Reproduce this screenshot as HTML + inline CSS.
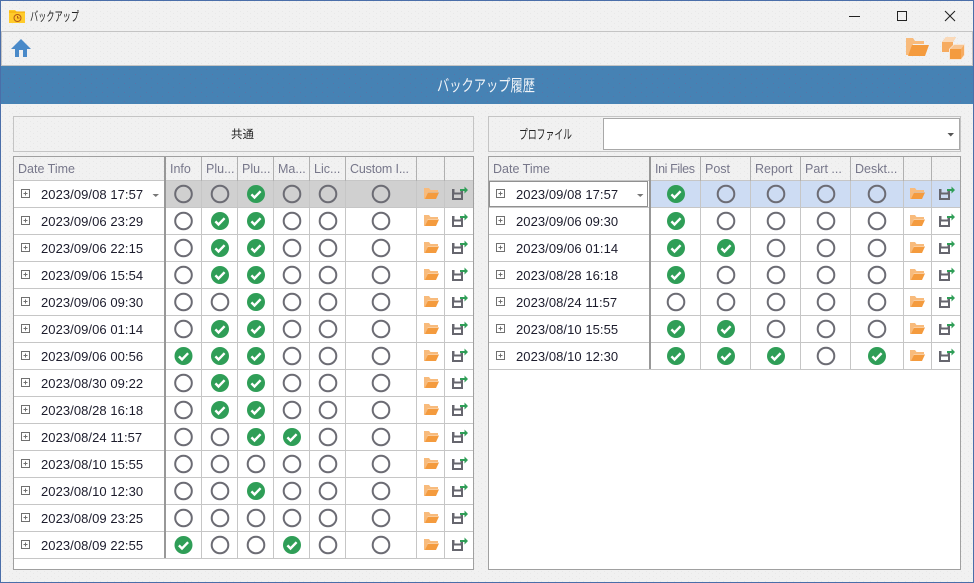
<!DOCTYPE html>
<html><head><meta charset="utf-8"><style>
html,body{margin:0;padding:0;background:#f1f1f1;width:974px;height:583px;overflow:hidden}
svg{display:block}
.d{font:13px "Liberation Sans",sans-serif;fill:#1c1c2c;letter-spacing:.06px}
.h{font:12.5px "Liberation Sans",sans-serif;fill:#77778a}
.j{font-family:"Liberation Sans","Noto Sans CJK JP",sans-serif;fill:#222}
.l{stroke:#c6c6c6;stroke-width:1}
</style></head><body>
<svg width="974" height="583" viewBox="0 0 974 583" xmlns="http://www.w3.org/2000/svg">
<defs>
<pattern id="dots" width="7" height="5" patternUnits="userSpaceOnUse"><rect x="2" y="1" width="1" height="1" fill="#e8e8e8"/><rect x="5" y="3" width="1" height="1" fill="#e8e8e8"/></pattern>
<pattern id="bd" width="11" height="9" patternUnits="userSpaceOnUse"><rect x="3" y="2" width="1" height="1" fill="#5a74a8"/><rect x="8" y="6" width="1" height="1" fill="#5a74a8"/></pattern>
<g id="o"><circle cx="0" cy="0" r="8.3" fill="none" stroke="#6c6c74" stroke-width="2"/></g>
<g id="c"><circle cx="0" cy="0" r="9" fill="#2f9e57"/><path d="M-4.6 0.4 L-1.5 3.5 L4.6 -2.8" fill="none" stroke="#fff" stroke-width="2.4"/></g>
<g id="f"><path d="M-8 -6 H-3 L-1.5 -4 H6 V-2 H-4 L-6.5 5 H-8 Z" fill="#f8bb7c"/><path d="M-4 -1.500 H7 L4 5 H-7 Z" fill="#f49b3e"/></g>
<g id="s"><path d="M-7 -5 H-4.500 V-1.500 H1.500 V-3 H4 V6 H-7 Z M-5 0.500 V4 H2 V0.500 Z" fill="#66666e" fill-rule="evenodd"/><path d="M1 -5 H5.500 V-7.500 L9 -4 L5.500 -0.500 V-3 H1 Z" fill="#2f9e57"/></g>
<g id="p"><rect x="-4.500" y="-4.500" width="8" height="8" fill="#fff" stroke="#707070"/><path d="M-2.500 -0.500 H1.500 M-0.500 -2.500 V1.500" stroke="#707070" fill="none"/></g>
</defs>

<rect width="974" height="583" fill="#f1f1f1"/>
<rect width="974" height="583" fill="url(#dots)"/>
<rect x="0.500" y="0.500" width="973" height="582" fill="none" stroke="#4a6ea9"/>

<!-- title bar -->
<path d="M9 10 H15 L17 12 H25 V23 H9 Z" fill="#ffcb2b"/>
<path d="M9 12 H25" stroke="#f2a900"/>
<circle cx="17.500" cy="18" r="3.500" fill="none" stroke="#b4591a"/>
<path d="M17.500 16 V18 H19.500" fill="none" stroke="#b4591a"/>
<text x="30" y="21" class="j" font-size="13" textLength="49" lengthAdjust="spacingAndGlyphs">バックアップ</text>
<path d="M849 16.500 H860" stroke="#222"/>
<rect x="897.500" y="11.500" width="9" height="9" fill="none" stroke="#222"/>
<path d="M945 11 L955 21 M955 11 L945 21" stroke="#222" stroke-width="1.100"/>

<!-- toolbar -->
<rect x="1.500" y="31.500" width="971" height="34" fill="none" stroke="#c4c4c4"/>
<path d="M21 39 L31 49 H27 V57 H23 V50 H19 V57 H15 V49 H11 Z" fill="#4a8ac9"/>
<path d="M906 38 H913 L915 41 H924 V44 H913 L909 55 H906 Z" fill="#f8bb7c"/>
<path d="M912 45 H929 L925 56 H908 Z" fill="#f49b3e"/>
<path d="M942 42 L946 37 H956 L953 42 V52 H942 Z" fill="#f6ab60"/>
<path d="M946 37 H956 L953 42 H942 Z" fill="#fad9b8"/>
<path d="M949 49 L954 44 H965 V55 L961 60 H949 Z" fill="#f8e6d4"/>
<rect x="950" y="49" width="11" height="10" fill="#f49b3e"/>
<path d="M950 49 L954 45 H964 L961 49 Z" fill="#f8c592"/>
<path d="M961 49 L964 45 V55 L961 59 Z" fill="#f6ab60"/>

<!-- band -->
<rect x="1" y="66" width="972" height="38" fill="#4682b4"/>
<rect x="1" y="66" width="972" height="38" fill="url(#bd)"/>
<text x="437" y="91" class="j" style="fill:#f0f4f8" font-size="16" textLength="98" lengthAdjust="spacingAndGlyphs">バックアップ履歴</text>

<!-- left header box -->
<rect x="13.500" y="116.500" width="460" height="35" fill="none" stroke="#c4c4c4"/>
<text x="231" y="138" class="j" font-size="11.500" textLength="23">共通</text>

<!-- right header box -->
<rect x="488.500" y="116.500" width="472" height="35" fill="none" stroke="#c4c4c4"/>
<text x="519" y="139" class="j" font-size="13" textLength="53" lengthAdjust="spacingAndGlyphs">プロファイル</text>
<rect x="603.500" y="118.500" width="356" height="31" fill="#fff" stroke="#a8a8a8"/>
<path d="M947.500 133 H954 L950.750 136.500 Z" fill="#555"/>

<!-- left grid -->
<rect x="13.500" y="156.500" width="460" height="413" fill="#fff" stroke="#a0a0a0"/>
<rect x="14" y="157" width="459" height="24" fill="#f1f1f1"/>
<rect x="14" y="157" width="459" height="24" fill="url(#dots)"/>
<rect x="166" y="181" width="307" height="26" fill="#d0d0d0"/>
<path class="l" d="M14 180.500H473M14 207.500H473M14 234.500H473M14 261.500H473M14 288.500H473M14 315.500H473M14 342.500H473M14 369.500H473M14 396.500H473M14 423.500H473M14 450.500H473M14 477.500H473M14 504.500H473M14 531.500H473M14 558.500H473"/>
<path class="l" d="M201.500 157V558M237.500 157V558M273.500 157V558M309.500 157V558M345.500 157V558M416.500 157V558M444.500 157V558"/>
<path d="M201.500 157V181M237.500 157V181M273.500 157V181M309.500 157V181M345.500 157V181M416.500 157V181M444.500 157V181" stroke="#b0b0b0"/>
<rect x="164" y="157" width="2" height="401" fill="#989898"/>
<text x="18" y="173" class="h" textLength="57">Date Time</text>
<text x="170" y="173" class="h">Info</text>
<text x="206" y="173" class="h">Plu...</text>
<text x="242" y="173" class="h">Plu...</text>
<text x="278" y="173" class="h">Ma...</text>
<text x="314" y="173" class="h">Lic...</text>
<text x="350" y="173" class="h" textLength="59">Custom I...</text>

<!-- left rows -->
<g id="leftDates">
<use href="#p" x="26" y="194"/><text x="41" y="199" class="d">2023/09/08 17:57</text>
<use href="#p" x="26" y="221"/><text x="41" y="226" class="d">2023/09/06 23:29</text>
<use href="#p" x="26" y="248"/><text x="41" y="253" class="d">2023/09/06 22:15</text>
<use href="#p" x="26" y="275"/><text x="41" y="280" class="d">2023/09/06 15:54</text>
<use href="#p" x="26" y="302"/><text x="41" y="307" class="d">2023/09/06 09:30</text>
<use href="#p" x="26" y="329"/><text x="41" y="334" class="d">2023/09/06 01:14</text>
<use href="#p" x="26" y="356"/><text x="41" y="361" class="d">2023/09/06 00:56</text>
<use href="#p" x="26" y="383"/><text x="41" y="388" class="d">2023/08/30 09:22</text>
<use href="#p" x="26" y="410"/><text x="41" y="415" class="d">2023/08/28 16:18</text>
<use href="#p" x="26" y="437"/><text x="41" y="442" class="d">2023/08/24 11:57</text>
<use href="#p" x="26" y="464"/><text x="41" y="469" class="d">2023/08/10 15:55</text>
<use href="#p" x="26" y="491"/><text x="41" y="496" class="d">2023/08/10 12:30</text>
<use href="#p" x="26" y="518"/><text x="41" y="523" class="d">2023/08/09 23:25</text>
<use href="#p" x="26" y="545"/><text x="41" y="550" class="d">2023/08/09 22:55</text>
</g>
<path d="M152.500 194 H159 L155.750 197 Z" fill="#777"/>

<!-- left status columns -->
<g>
<use href="#o" x="183.500" y="194"/><use href="#o" x="220" y="194"/><use href="#c" x="256" y="194"/><use href="#o" x="292" y="194"/><use href="#o" x="328" y="194"/><use href="#o" x="381" y="194"/>
<use href="#o" x="183.500" y="221"/><use href="#c" x="220" y="221"/><use href="#c" x="256" y="221"/><use href="#o" x="292" y="221"/><use href="#o" x="328" y="221"/><use href="#o" x="381" y="221"/>
<use href="#o" x="183.500" y="248"/><use href="#c" x="220" y="248"/><use href="#c" x="256" y="248"/><use href="#o" x="292" y="248"/><use href="#o" x="328" y="248"/><use href="#o" x="381" y="248"/>
<use href="#o" x="183.500" y="275"/><use href="#c" x="220" y="275"/><use href="#c" x="256" y="275"/><use href="#o" x="292" y="275"/><use href="#o" x="328" y="275"/><use href="#o" x="381" y="275"/>
<use href="#o" x="183.500" y="302"/><use href="#o" x="220" y="302"/><use href="#c" x="256" y="302"/><use href="#o" x="292" y="302"/><use href="#o" x="328" y="302"/><use href="#o" x="381" y="302"/>
<use href="#o" x="183.500" y="329"/><use href="#c" x="220" y="329"/><use href="#c" x="256" y="329"/><use href="#o" x="292" y="329"/><use href="#o" x="328" y="329"/><use href="#o" x="381" y="329"/>
<use href="#c" x="183.500" y="356"/><use href="#c" x="220" y="356"/><use href="#c" x="256" y="356"/><use href="#o" x="292" y="356"/><use href="#o" x="328" y="356"/><use href="#o" x="381" y="356"/>
<use href="#o" x="183.500" y="383"/><use href="#c" x="220" y="383"/><use href="#c" x="256" y="383"/><use href="#o" x="292" y="383"/><use href="#o" x="328" y="383"/><use href="#o" x="381" y="383"/>
<use href="#o" x="183.500" y="410"/><use href="#c" x="220" y="410"/><use href="#c" x="256" y="410"/><use href="#o" x="292" y="410"/><use href="#o" x="328" y="410"/><use href="#o" x="381" y="410"/>
<use href="#o" x="183.500" y="437"/><use href="#o" x="220" y="437"/><use href="#c" x="256" y="437"/><use href="#c" x="292" y="437"/><use href="#o" x="328" y="437"/><use href="#o" x="381" y="437"/>
<use href="#o" x="183.500" y="464"/><use href="#o" x="220" y="464"/><use href="#o" x="256" y="464"/><use href="#o" x="292" y="464"/><use href="#o" x="328" y="464"/><use href="#o" x="381" y="464"/>
<use href="#o" x="183.500" y="491"/><use href="#o" x="220" y="491"/><use href="#c" x="256" y="491"/><use href="#o" x="292" y="491"/><use href="#o" x="328" y="491"/><use href="#o" x="381" y="491"/>
<use href="#o" x="183.500" y="518"/><use href="#o" x="220" y="518"/><use href="#o" x="256" y="518"/><use href="#o" x="292" y="518"/><use href="#o" x="328" y="518"/><use href="#o" x="381" y="518"/>
<use href="#c" x="183.500" y="545"/><use href="#o" x="220" y="545"/><use href="#o" x="256" y="545"/><use href="#c" x="292" y="545"/><use href="#o" x="328" y="545"/><use href="#o" x="381" y="545"/>
</g>
<g>
<use href="#f" x="432" y="194"/><use href="#s" x="459" y="194"/>
<use href="#f" x="432" y="221"/><use href="#s" x="459" y="221"/>
<use href="#f" x="432" y="248"/><use href="#s" x="459" y="248"/>
<use href="#f" x="432" y="275"/><use href="#s" x="459" y="275"/>
<use href="#f" x="432" y="302"/><use href="#s" x="459" y="302"/>
<use href="#f" x="432" y="329"/><use href="#s" x="459" y="329"/>
<use href="#f" x="432" y="356"/><use href="#s" x="459" y="356"/>
<use href="#f" x="432" y="383"/><use href="#s" x="459" y="383"/>
<use href="#f" x="432" y="410"/><use href="#s" x="459" y="410"/>
<use href="#f" x="432" y="437"/><use href="#s" x="459" y="437"/>
<use href="#f" x="432" y="464"/><use href="#s" x="459" y="464"/>
<use href="#f" x="432" y="491"/><use href="#s" x="459" y="491"/>
<use href="#f" x="432" y="518"/><use href="#s" x="459" y="518"/>
<use href="#f" x="432" y="545"/><use href="#s" x="459" y="545"/>
</g>

<!-- right grid -->
<rect x="488.500" y="156.500" width="472" height="413" fill="#fff" stroke="#a0a0a0"/>
<rect x="489" y="157" width="471" height="24" fill="#f1f1f1"/>
<rect x="489" y="157" width="471" height="24" fill="url(#dots)"/>
<rect x="651" y="181" width="309" height="26" fill="#cddcf3"/>
<path class="l" d="M489 180.500H960M489 207.500H960M489 234.500H960M489 261.500H960M489 288.500H960M489 315.500H960M489 342.500H960M489 369.500H960"/>
<path class="l" d="M700.500 157V369M750.500 157V369M800.500 157V369M850.500 157V369M903.500 157V369M931.500 157V369"/>
<path d="M700.500 157V181M750.500 157V181M800.500 157V181M850.500 157V181M903.500 157V181M931.500 157V181" stroke="#b0b0b0"/>
<rect x="649" y="157" width="2" height="212" fill="#989898"/>
<rect x="489.500" y="181.500" width="158" height="25" fill="#fff" stroke="#222" stroke-dasharray="1 1"/>
<text x="493" y="173" class="h" textLength="57">Date Time</text>
<text x="655" y="173" class="h" textLength="40">Ini Files</text>
<text x="705" y="173" class="h">Post</text>
<text x="755" y="173" class="h">Report</text>
<text x="805" y="173" class="h">Part ...</text>
<text x="855" y="173" class="h">Deskt...</text>

<use href="#p" x="501" y="194"/><text x="516" y="199" class="d">2023/09/08 17:57</text>
<use href="#p" x="501" y="221"/><text x="516" y="226" class="d">2023/09/06 09:30</text>
<use href="#p" x="501" y="248"/><text x="516" y="253" class="d">2023/09/06 01:14</text>
<use href="#p" x="501" y="275"/><text x="516" y="280" class="d">2023/08/28 16:18</text>
<use href="#p" x="501" y="302"/><text x="516" y="307" class="d">2023/08/24 11:57</text>
<use href="#p" x="501" y="329"/><text x="516" y="334" class="d">2023/08/10 15:55</text>
<use href="#p" x="501" y="356"/><text x="516" y="361" class="d">2023/08/10 12:30</text>
<path d="M637 194 H643.500 L640.250 197 Z" fill="#777"/>

<g>
<use href="#c" x="676" y="194"/><use href="#o" x="726" y="194"/><use href="#o" x="776" y="194"/><use href="#o" x="826" y="194"/><use href="#o" x="877" y="194"/>
<use href="#c" x="676" y="221"/><use href="#o" x="726" y="221"/><use href="#o" x="776" y="221"/><use href="#o" x="826" y="221"/><use href="#o" x="877" y="221"/>
<use href="#c" x="676" y="248"/><use href="#c" x="726" y="248"/><use href="#o" x="776" y="248"/><use href="#o" x="826" y="248"/><use href="#o" x="877" y="248"/>
<use href="#c" x="676" y="275"/><use href="#o" x="726" y="275"/><use href="#o" x="776" y="275"/><use href="#o" x="826" y="275"/><use href="#o" x="877" y="275"/>
<use href="#o" x="676" y="302"/><use href="#o" x="726" y="302"/><use href="#o" x="776" y="302"/><use href="#o" x="826" y="302"/><use href="#o" x="877" y="302"/>
<use href="#c" x="676" y="329"/><use href="#c" x="726" y="329"/><use href="#o" x="776" y="329"/><use href="#o" x="826" y="329"/><use href="#o" x="877" y="329"/>
<use href="#c" x="676" y="356"/><use href="#c" x="726" y="356"/><use href="#c" x="776" y="356"/><use href="#o" x="826" y="356"/><use href="#c" x="877" y="356"/>
</g>
<g>
<use href="#f" x="918" y="194"/><use href="#s" x="946" y="194"/>
<use href="#f" x="918" y="221"/><use href="#s" x="946" y="221"/>
<use href="#f" x="918" y="248"/><use href="#s" x="946" y="248"/>
<use href="#f" x="918" y="275"/><use href="#s" x="946" y="275"/>
<use href="#f" x="918" y="302"/><use href="#s" x="946" y="302"/>
<use href="#f" x="918" y="329"/><use href="#s" x="946" y="329"/>
<use href="#f" x="918" y="356"/><use href="#s" x="946" y="356"/>
</g>
</svg>
</body></html>
